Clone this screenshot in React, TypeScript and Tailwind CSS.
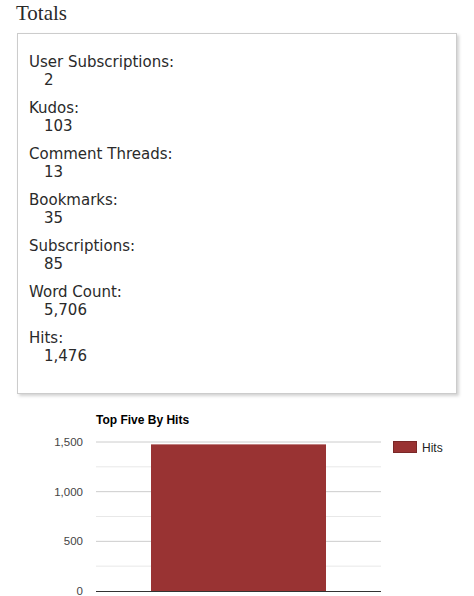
import React from "react"

const stats = [
  { label: "User Subscriptions:", value: "2" },
  { label: "Kudos:", value: "103" },
  { label: "Comment Threads:", value: "13" },
  { label: "Bookmarks:", value: "35" },
  { label: "Subscriptions:", value: "85" },
  { label: "Word Count:", value: "5,706" },
  { label: "Hits:", value: "1,476" },
]

function HitsChart() {
  // y scale: 0 at 591, 1500 at 442
  const y = (v: number) => 591 - (v / 1500) * 149
  const font = "'Liberation Sans', Arial, sans-serif"
  return (
    <svg width="474" height="196" viewBox="0 400 474 196" className="block">
      <text x="96" y="423.5" fontFamily={font} fontSize="12" fontWeight="bold" fill="#000">Top Five By Hits</text>
      {[1500, 1000, 500].map((v) => (
        <line key={v} x1="96" x2="381" y1={y(v)} y2={y(v)} stroke="#cccccc" strokeWidth="1" />
      ))}
      {[1250, 750, 250].map((v) => (
        <line key={v} x1="96" x2="381" y1={y(v)} y2={y(v)} stroke="#e8e8e8" strokeWidth="1" />
      ))}
      <rect x="151" y={y(1476)} width="175" height={591 - y(1476)} fill="#993333" />
      <line x1="96" x2="381" y1="591.5" y2="591.5" stroke="#333333" strokeWidth="1" />
      {[1500, 1000, 500, 0].map((v) => (
        <text key={v} x="83" y={y(v) + 4} textAnchor="end" fontFamily={font} fontSize="11.5" fill="#444">
          {v.toLocaleString("en-US")}
        </text>
      ))}
      <rect x="393.5" y="441.5" width="23" height="11" fill="#993333" stroke="#7a2828" strokeWidth="1" />
      <text x="422" y="452" fontFamily={font} fontSize="12" fill="#222">Hits</text>
    </svg>
  )
}

export default function App() {
  return (
    <div className="w-[474px] h-[596px] bg-white overflow-hidden text-[#2a2a2a]">
      <h2 className="pl-[16px] pt-[1px] text-[21px] leading-[24px] font-['Liberation_Serif',serif]">Totals</h2>

      <div className="ml-[17px] mt-[8px] w-[440px] h-[361px] border border-[#cccccc] shadow-[2px_2px_3px_rgba(0,0,0,0.18)] pl-[11px] pt-[19px] font-['DejaVu_Sans',Verdana,sans-serif] text-[15px] leading-[18px]">
        <dl className="flex flex-col gap-[10px]">
          {stats.map((s) => (
            <div key={s.label}>
              <dt>{s.label}</dt>
              <dd className="pl-[15px]">{s.value}</dd>
            </div>
          ))}
        </dl>
      </div>

      <div className="mt-[6px]">
        <HitsChart />
      </div>
    </div>
  )
}
